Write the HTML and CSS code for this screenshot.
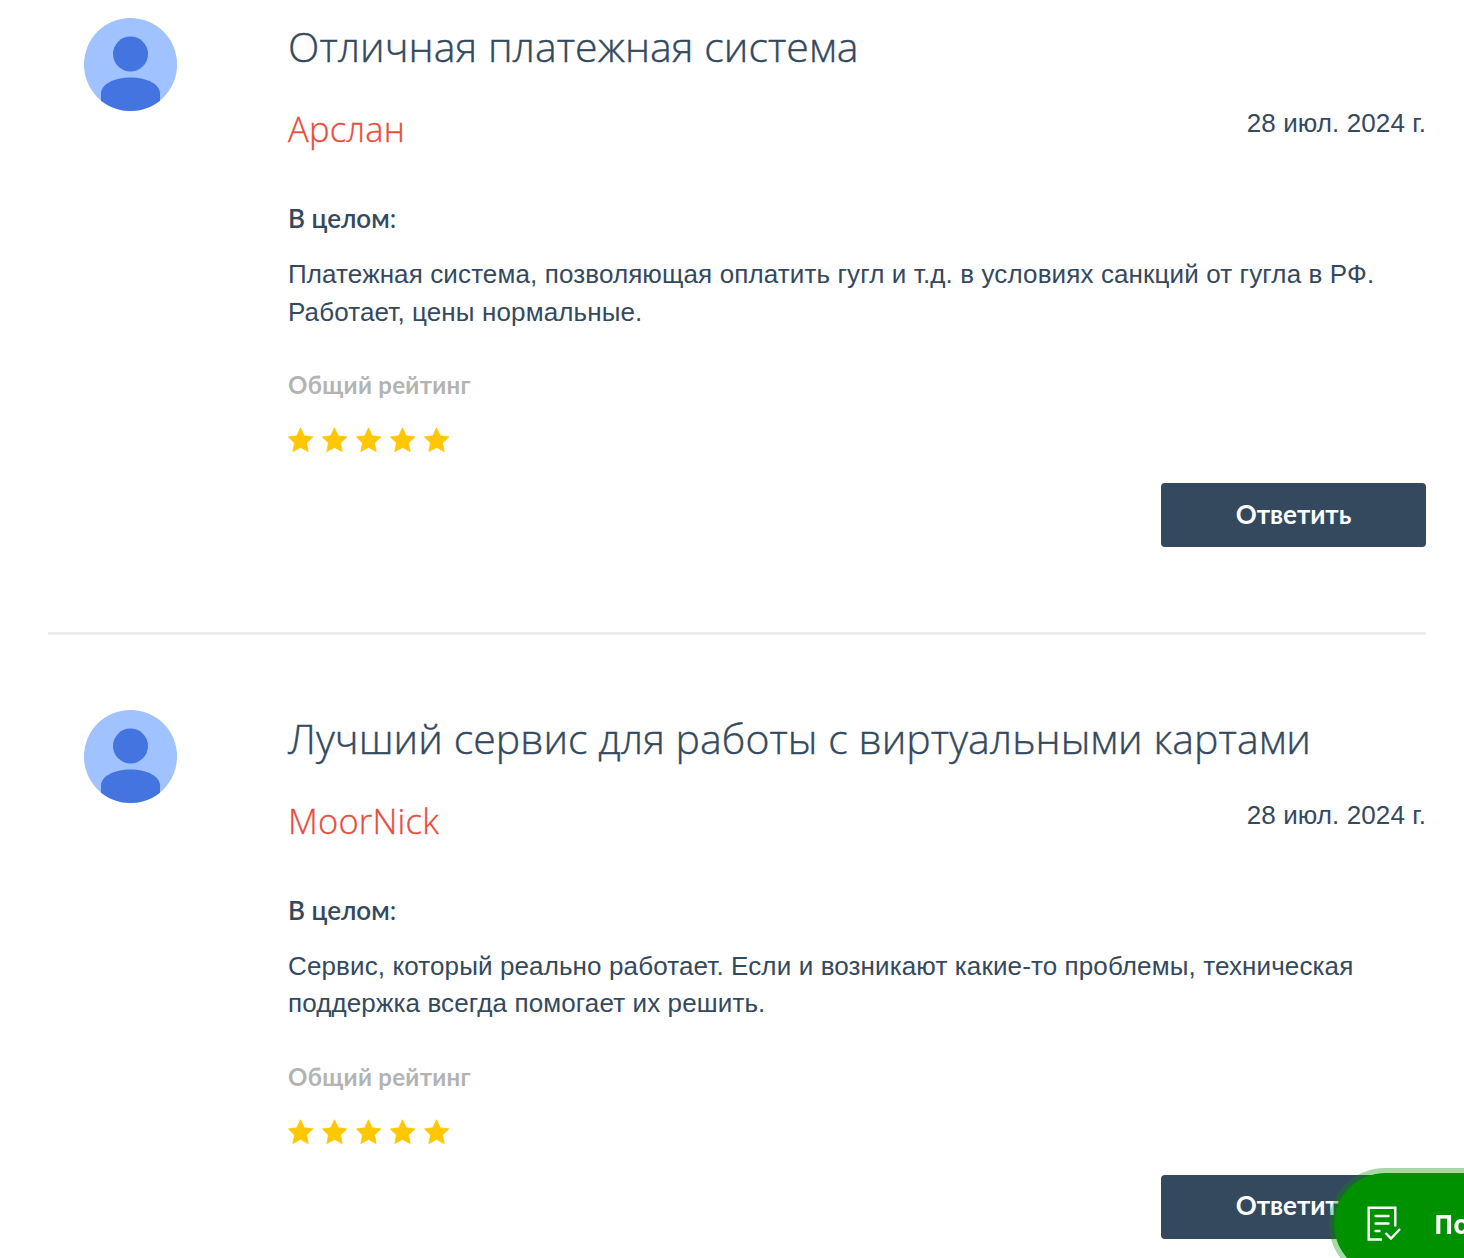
FILE: index.html
```html
<!doctype html>
<html lang="ru">
<head>
    <meta charset="UTF-8">
    <meta name="viewport" content="width=device-width, initial-scale=1.0">
    <title>Отзывы</title>
    <link rel="stylesheet" href="styles.css">
</head>
<body>
    <svg width="0" height="0" class="sprite">
        <symbol id="avatar" viewBox="0 0 94 94">
            <clipPath id="round"><circle cx="46.5" cy="47" r="46.6"/></clipPath>
            <g clip-path="url(#round)">
                <rect width="94" height="94" fill="#a0c2ff"/>
                <circle cx="46.5" cy="36.5" r="17.5" fill="#4374e0"/>
                <path d="M17 94V76C17 67 29.5 60 46.5 60S76 67 76 76v18z" fill="#4374e0"/>
            </g>
        </symbol>
        <symbol id="star" viewBox="0 0 26 26">
            <path d="M12.5 .8l3.7 8 8.7 1.1-6.4 6 1.7 8.7-7.7-4.2-7.7 4.2 1.7-8.7L.4 9.900l8.400-1.100z" fill="#ffc700" stroke="#ffc700" stroke-width=".8" stroke-linejoin="round"/>
        </symbol>
    </svg>

    <div class="reviews">
        <div class="review">
            <svg class="avatar"><use href="#avatar"/></svg>
            <div class="content">
                <h2>Отличная платежная система</h2>
                <div class="meta">
                    <div class="author">Арслан</div>
                    <div class="date">28 июл. 2024 г.</div>
                </div>
                <div class="label">В целом<span>:</span></div>
                <p>Платежная система, позволяющая оплатить гугл и т.д. в условиях санкций от гугла в РФ.<br>Работает, цены нормальные.</p>
                <div class="rating-label">Общий рейтинг</div>
                <div class="stars">
                    <svg><use href="#star"/></svg>
                    <svg><use href="#star"/></svg>
                    <svg><use href="#star"/></svg>
                    <svg><use href="#star"/></svg>
                    <svg><use href="#star"/></svg>
                </div>
                <button>Ответить</button>
            </div>
        </div>
        <div class="review">
            <svg class="avatar"><use href="#avatar"/></svg>
            <div class="content">
                <h2>Лучший сервис для работы с виртуальными картами</h2>
                <div class="meta">
                    <div class="author">MoorNick</div>
                    <div class="date">28 июл. 2024 г.</div>
                </div>
                <div class="label">В целом<span>:</span></div>
                <p>Сервис, который реально работает. Если и возникают какие-то проблемы, техническая<br>поддержка всегда помогает их решить.</p>
                <div class="rating-label">Общий рейтинг</div>
                <div class="stars">
                    <svg><use href="#star"/></svg>
                    <svg><use href="#star"/></svg>
                    <svg><use href="#star"/></svg>
                    <svg><use href="#star"/></svg>
                    <svg><use href="#star"/></svg>
                </div>
                <button>Ответить</button>
            </div>
        </div>
    </div>

    <div class="widget">
        <svg viewBox="0 0 34 36" fill="none" stroke="#fff" stroke-width="2.4">
            <path d="M15 33.5H1.7V1.7h26.6v18.8"/>
            <path d="M8.5 10h13M8.5 17.5h13M8.5 25h4" stroke-linecap="round"/>
            <path d="M18.5 27l5.5 5.5 9-9.5"/>
        </svg>
        <span>По</span>
    </div>
</body>
</html>
```

FILE: styles.css
```css
body {
    margin: 0;
    height: 1258px;
    overflow: hidden;
    background: #fff;
    color: #34495e;
    font-family: "Liberation Sans", Arial, sans-serif;
}
.sprite {
    display: block;
}
.reviews {
    padding: 0 38px 0 48px;
}
.review {
    display: flex;
    box-sizing: border-box;
    height: 634.5px;
    padding: 17px 0 0 36px;
    border-bottom: 3px solid #ebedef;
}
.review:last-child {
    height: auto;
    margin-top: 57px;
    border-bottom: none;
}
.avatar {
    flex: none;
    width: 94px;
    height: 95px;
    margin-right: 110px;
}
.content {
    flex: 1;
    display: flex;
    flex-direction: column;
}
h2 {
    margin: 4px 0 0;
    font: 300 41px/50px "Open Sans", sans-serif;
    letter-spacing: 0.05px;
    white-space: nowrap;
    -webkit-text-stroke: 0.4px #34495e;
}
.meta {
    display: flex;
    justify-content: space-between;
    margin-top: 33px;
    height: 50px;
}
.author {
    font: 300 34.5px/49px "Open Sans", sans-serif;
    letter-spacing: 0.2px;
    color: #e74c3c;
    -webkit-text-stroke: 0.3px #e74c3c;
}
.date {
    font-size: 26px;
    line-height: 38px;
    letter-spacing: 0.1px;
}
.label {
    margin-top: 46px;
    font: 600 26px/37px Lato, sans-serif;
}
.label span {
    font-weight: 400;
}
p {
    margin: 19px 0 0;
    font-size: 26px;
    line-height: 37.5px;
    letter-spacing: 0.12px;
    white-space: nowrap;
}
.rating-label {
    margin-top: 37px;
    font: 700 24px/34px Lato, sans-serif;
    letter-spacing: 0.3px;
    color: #b3b3b3;
}
.stars {
    display: flex;
    gap: 8px;
    margin-top: 25px;
}
.stars svg {
    width: 26px;
    height: 26px;
}
button {
    align-self: flex-end;
    width: 265px;
    height: 64px;
    margin: 30px 0 0;
    padding: 0 0 3px;
    border: none;
    border-radius: 4px;
    background: #34495e;
    color: #fff;
    font: 700 26px Lato, sans-serif;
}
/* floating button, runs off the right edge */
.widget {
    position: fixed;
    left: 1329px;
    top: 1168px;
    display: flex;
    align-items: center;
    box-sizing: border-box;
    width: 400px;
    height: 112px;
    padding-left: 33px;
    border: 5px solid rgba(0, 145, 0, 0.35);
    border-radius: 56px;
    background: #009100;
    background-clip: padding-box;
    color: #fff;
    font: 700 26px "Open Sans", sans-serif;
}
.widget svg {
    width: 34px;
    height: 36px;
    margin-right: 33px;
}
```
